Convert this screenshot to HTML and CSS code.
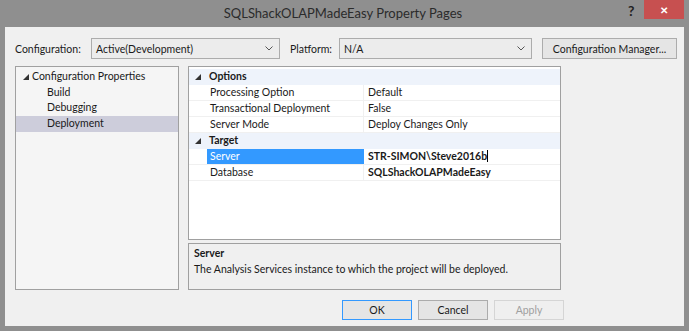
FILE: index.html
```html
<!DOCTYPE html>
<html lang="en">
  <head>
    <meta charset="UTF-8" />
    <title>SQLShackOLAPMadeEasy Property Pages</title>
    <link rel="stylesheet" href="styles.css">
  </head>
  <body>
    <div class="window">
      <div class="titlebar">
        <span class="title">SQLShackOLAPMadeEasy Property Pages</span>
        <span class="help">?</span>
        <span class="close">&#x2715;</span>
      </div>

      <div class="client">
        <div class="config-row">
          <span class="label">Configuration:</span>
          <div class="select select-config">
            <span>Active(Development)</span>
            <svg class="chev" width="8" height="5" viewBox="0 0 8 5"><path d="M0.5 0.5 L4 4 L7.5 0.5" fill="none" stroke="#555" stroke-width="1"/></svg>
          </div>
          <span class="label label-platform">Platform:</span>
          <div class="select select-platform">
            <span>N/A</span>
            <svg class="chev" width="8" height="5" viewBox="0 0 8 5"><path d="M0.5 0.5 L4 4 L7.5 0.5" fill="none" stroke="#555" stroke-width="1"/></svg>
          </div>
          <button class="btn btn-manager">Configuration Manager...</button>
        </div>

        <div class="main">
          <div class="tree">
            <div class="tree-item root">
              <svg class="tri" width="6" height="6" viewBox="0 0 6 6"><path d="M6 0 L6 6 L0 6 Z" fill="#333"/></svg>
              Configuration Properties
            </div>
            <div class="tree-item child">Build</div>
            <div class="tree-item child">Debugging</div>
            <div class="tree-item child selected">Deployment</div>
          </div>

          <div class="right">
            <div class="grid">
              <div class="row category">
                <span class="gutter"><svg class="tri" width="6" height="6" viewBox="0 0 6 6"><path d="M6 0 L6 6 L0 6 Z" fill="#333"/></svg></span>
                <span class="cat-name">Options</span>
              </div>
              <div class="row">
                <span class="gutter"></span>
                <span class="name">Processing Option</span>
                <span class="value">Default</span>
              </div>
              <div class="row">
                <span class="gutter"></span>
                <span class="name">Transactional Deployment</span>
                <span class="value">False</span>
              </div>
              <div class="row">
                <span class="gutter"></span>
                <span class="name">Server Mode</span>
                <span class="value">Deploy Changes Only</span>
              </div>
              <div class="row category">
                <span class="gutter"><svg class="tri" width="6" height="6" viewBox="0 0 6 6"><path d="M6 0 L6 6 L0 6 Z" fill="#333"/></svg></span>
                <span class="cat-name">Target</span>
              </div>
              <div class="row">
                <span class="gutter"></span>
                <span class="name active">Server</span>
                <span class="value bold">STR-SIMON\Steve2016b<span class="caret"></span></span>
              </div>
              <div class="row">
                <span class="gutter"></span>
                <span class="name">Database</span>
                <span class="value bold">SQLShackOLAPMadeEasy</span>
              </div>
            </div>

            <div class="description">
              <div class="desc-title">Server</div>
              <div class="desc-text">The Analysis Services instance to which the project will be deployed.</div>
            </div>
          </div>
        </div>

        <div class="buttons">
          <button class="btn btn-ok">OK</button>
          <button class="btn">Cancel</button>
          <button class="btn btn-disabled">Apply</button>
        </div>
      </div>
    </div>
  </body>
</html>
```

FILE: styles.css
```css
body {
  margin: 0;
  background-color: #8f8f8f;
  font-family: Lato, "Open Sans", sans-serif;
  font-size: 10.5px;
  color: #1a1a1a;
}

.window {
  width: 689px;
  height: 331px;
  display: flex;
  flex-direction: column;
}

.titlebar {
  height: 27px;
  position: relative;
  display: flex;
  justify-content: center;
  align-items: center;
}

.title {
  font-size: 13px;
  color: #2b2b2b;
  margin-right: 3px;
  margin-top: -1px;
}

.help {
  position: absolute;
  left: 628px;
  top: 2px;
  font-size: 14px;
  font-weight: bold;
  color: #222;
}

.close {
  position: absolute;
  left: 644px;
  top: 0;
  width: 40px;
  height: 19px;
  background-color: #c75050;
  color: white;
  font-size: 10px;
  font-weight: bold;
  display: flex;
  align-items: center;
  justify-content: center;
}

.client {
  margin: 0 5px;
  height: 299px;
  background-color: #f0f0f0;
  padding: 11px 10px 0 10px;
  box-sizing: border-box;
}

.config-row {
  display: flex;
  align-items: center;
  height: 21px;
  white-space: nowrap;
}

.label {
  width: 76px;
  flex-shrink: 0;
}

.label-platform {
  width: 49px;
  margin-left: 10px;
}

.select {
  height: 21px;
  flex-shrink: 0;
  box-sizing: border-box;
  border: 1px solid #acacac;
  background-color: #ececec;
  display: flex;
  align-items: center;
  justify-content: space-between;
  padding: 0 6px 0 4px;
}

.select-config {
  width: 189px;
}

.select-platform {
  width: 193px;
}

.btn {
  font-family: inherit;
  font-size: 10.5px;
  color: #1a1a1a;
  background-color: #e5e5e5;
  border: 1px solid #acacac;
  height: 20px;
  width: 70px;
  padding: 0;
  box-sizing: border-box;
  white-space: nowrap;
}

.btn-manager {
  width: 135px;
  height: 21px;
  margin-left: 10px;
  flex-shrink: 0;
}

.main {
  display: flex;
  margin-top: 7px;
  height: 224px;
}

.tree {
  width: 164px;
  box-sizing: border-box;
  border: 1px solid #a0a0a0;
  background-color: #f5f5f5;
  padding-top: 2px;
}

.tree-item {
  height: 15.5px;
  line-height: 15px;
  display: flex;
  align-items: center;
}

.tree-item.root {
  padding-left: 7px;
}

.tree-item.root .tri {
  margin-right: 3px;
}

.tree-item.child {
  padding-left: 31px;
}

.tree-item.selected {
  background-color: #cdcddb;
  height: 16px;
}

.right {
  width: 373px;
  margin-left: 9px;
  display: flex;
  flex-direction: column;
}

.grid {
  height: 175px;
  box-sizing: border-box;
  border: 1px solid #a0a0a0;
  background-color: white;
  padding-top: 2px;
}

.row {
  display: flex;
  height: 16px;
  line-height: 15px;
  border-bottom: 1px solid #f0f0f0;
  box-sizing: border-box;
  white-space: nowrap;
}

.row.category {
  background-color: #eef3fb;
  border-bottom: none;
}

.gutter {
  width: 18px;
  flex-shrink: 0;
  display: flex;
  align-items: center;
  justify-content: center;
}

.cat-name {
  font-weight: bold;
  padding-left: 2px;
}

.name {
  width: 157px;
  flex-shrink: 0;
  padding-left: 3px;
  box-sizing: border-box;
  border-right: 1px solid #f0f0f0;
}

.name.active {
  background-color: #3399ff;
  color: white;
  border-right: none;
}

.value {
  padding-left: 4px;
}

.bold {
  font-weight: bold;
}

.caret {
  display: inline-block;
  width: 1px;
  height: 12px;
  background-color: #000;
  vertical-align: -2px;
}

.description {
  margin-top: 3px;
  height: 47px;
  box-sizing: border-box;
  border: 1px solid #a0a0a0;
  background-color: #f0f0f0;
  padding: 1px 5px;
  line-height: 16px;
}

.desc-title {
  font-weight: bold;
}

.buttons {
  display: flex;
  gap: 6px;
  margin-top: 10px;
  padding-left: 327px;
}

.btn-ok {
  border-color: #3399ff;
}

.btn-disabled {
  color: #a0a0a0;
  border-color: #d5d5d5;
  background-color: #efefef;
}
```
